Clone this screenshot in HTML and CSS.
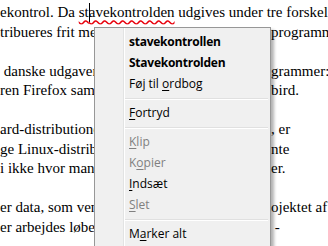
FILE: index.html
```html
<!DOCTYPE html>
<html lang="da">
<head>
  <meta charset="UTF-8" />
  <title>Stavekontrol</title>
  <link rel="stylesheet" href="styles.css">
</head>
<body>

  <div class="article">
    <p>
      <span class="line">ekontrol. Da <span class="misspelled">st<span class="caret"></span>avekontrolden</span> udgives under tre forskellige licenser, kan den</span>
      <span class="line split"><span class="head">tribueres frit med mange andre open source-</span><span class="tail">programmer,</span></span>
    </p>
    <p>
      <span class="line split"><span class="head">&nbsp;danske udgaver af stavekontrollen til pro</span><span class="tail">grammer:</span></span>
      <span class="line split"><span class="head">ren Firefox samt e-mail-programmet Thunder</span><span class="tail">bird.</span></span>
    </p>
    <p>
      <span class="line split"><span class="head">ard-distributionen af OpenOffice.org</span><span class="tail">, er</span></span>
      <span class="line split"><span class="head">ge Linux-distributioner, og den kan hente</span><span class="tail">nte</span></span>
      <span class="line split"><span class="head">i ikke hvor mange der bruger den, men vi gætt</span><span class="tail">er.</span></span>
    </p>
    <p>
      <span class="line split"><span class="head">er data, som vender tilbage til pr</span><span class="tail">ojektet af</span></span>
      <span class="line split"><span class="head">er arbejdes løbende med at forbedre ord</span><span class="tail">&nbsp;-</span></span>
    </p>
  </div>

  <!-- context menu from right-clicking the misspelled word -->
  <div class="context-menu">
    <div class="item suggestion">stavekontrollen</div>
    <div class="item suggestion">Stavekontrolden</div>
    <div class="item">Føj til <u>o</u>rdbog</div>
    <div class="separator"></div>
    <div class="item"><u>F</u>ortryd</div>
    <div class="separator"></div>
    <div class="item disabled"><u>K</u>lip</div>
    <div class="item disabled">K<u>o</u>pier</div>
    <div class="item"><u>I</u>ndsæt</div>
    <div class="item disabled"><u>S</u>let</div>
    <div class="separator"></div>
    <div class="item">M<u>a</u>rker alt</div>
  </div>

</body>
</html>
```

FILE: styles.css
```css
body {
  margin: 0;
  background: #fff;
  overflow: hidden;
  height: 246px;
}
.article {
  padding-top: 3px;
  font-family: "Liberation Serif", "Times New Roman", serif;
  font-size: 15px;
  line-height: 19.5px;
  color: #000;
  white-space: nowrap;
}
.article p {
  margin: 0 0 19.5px;
}
.line {
  display: block;
}
.line.split {
  display: grid;
  grid-template-columns: 271px max-content;
}
.head {
  overflow: hidden;
}
.misspelled {
  text-decoration: underline wavy #e8000b;
  text-decoration-skip-ink: none;
  text-underline-offset: 2px;
}
.caret {
  display: inline-block;
  width: 1px;
  height: 19px;
  margin-right: -1px;
  background: #000;
  vertical-align: top;
}

.context-menu {
  position: absolute;
  left: 94px;
  top: 27px;
  width: 175px;
  padding: 3px 0 12px;
  border: 1px solid #979797;
  background: linear-gradient(to right, #f0f0f0 28px, #e2e3e3 28px, #e2e3e3 29px, #fff 29px, #fff 30px, #f0f0f0 30px);
  box-shadow: 3px 3px 3px rgba(0,0,0,0.3);
  font-family: "Open Sans", "Noto Sans", sans-serif;
  font-size: 12px;
  color: #000;
}
.item {
  height: 21px;
  line-height: 21px;
  padding-left: 34px;
  white-space: nowrap;
}
.item.suggestion {
  font-weight: bold;
  letter-spacing: -0.25px;
}
.item.disabled {
  color: #808080;
}
.item u {
  text-underline-offset: 2px;
}
.separator {
  margin: 4px 2px 2px 30px;
  border-top: 1px solid #e0e0e0;
  border-bottom: 1px solid #fff;
}
```
